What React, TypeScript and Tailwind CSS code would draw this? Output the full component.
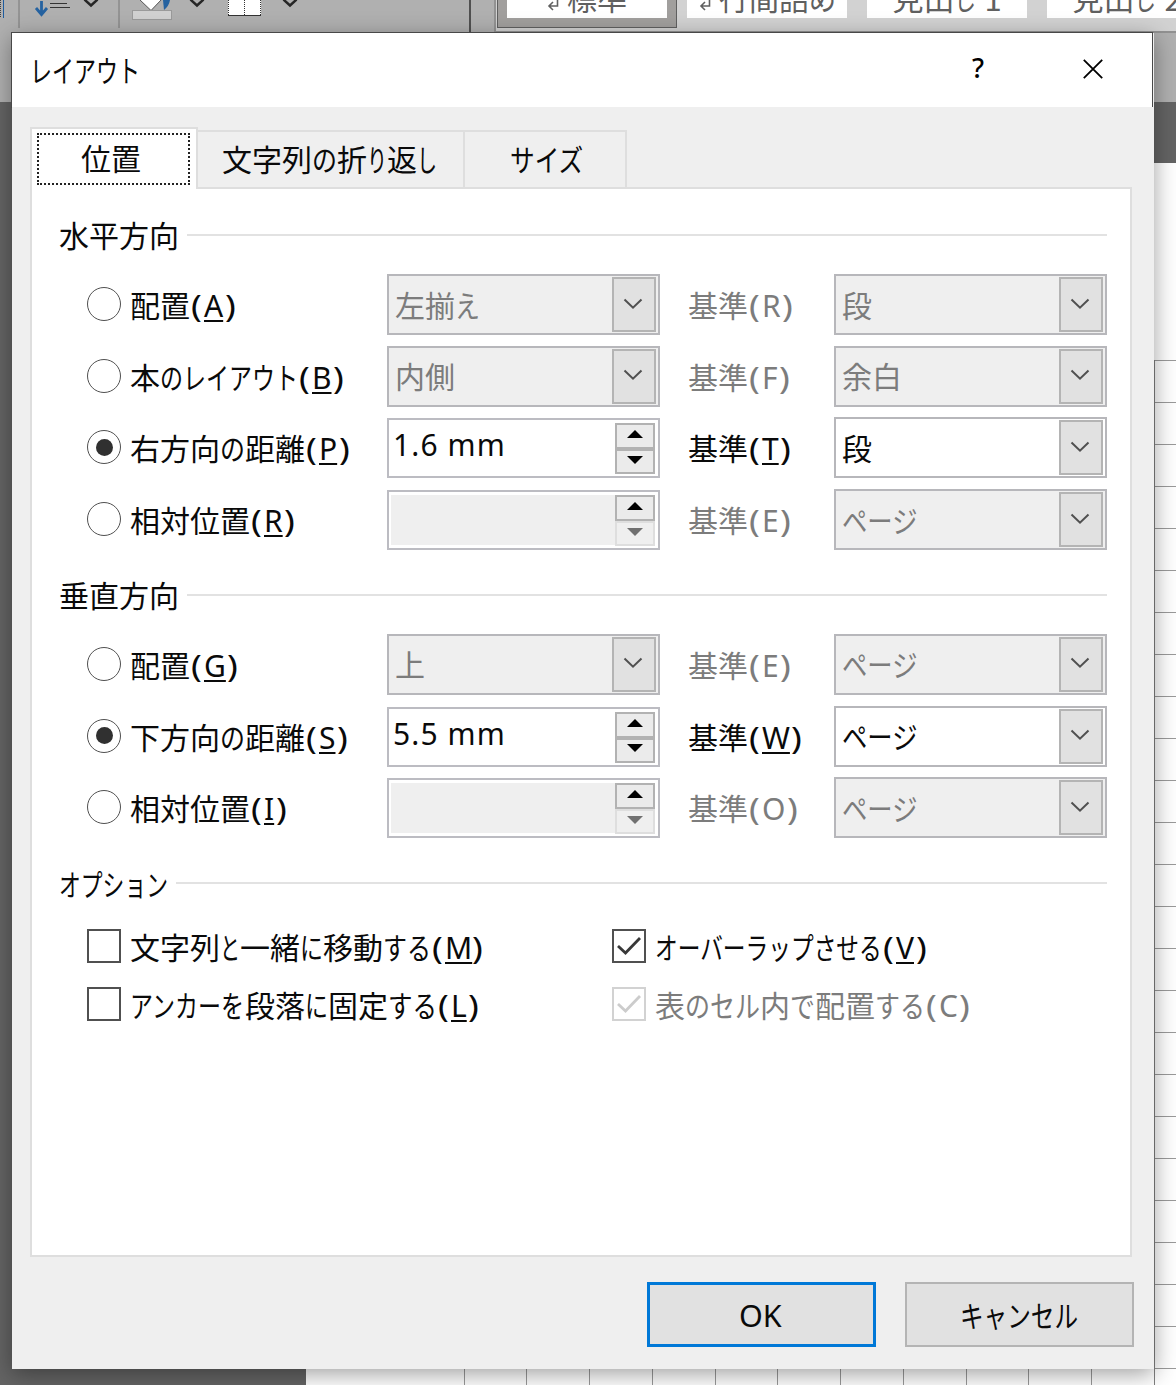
import React from "react";

type Part = string | [string, number];

/* A run of mixed kanji and narrow kana; a pair gives the kana and its drawn width. */
function Text({ parts, accel, off, plain, size = 30 }: { parts: Part[]; accel?: string; off?: boolean; plain?: boolean; size?: number }) {
  return (
    <span className={`flex whitespace-nowrap ${off ? "text-[#7c7c7c]" : "text-[#0a0a0a]"}`} style={{ fontSize: size }}>
      {parts.map((p, i) =>
        typeof p === "string" ? (
          <span key={i}>{p}</span>
        ) : (
          <span key={i} className="inline-block" style={{ width: p[1] }}>
            <span className="inline-block origin-left" style={{ transform: `scaleX(${p[1] / (p[0].length * size)})` }}>
              {p[0]}
            </span>
          </span>
        )
      )}
      {accel && (
        <span className="flex font-['Noto_Sans']">
          <span className="w-[13px] pr-px text-center"><span className="inline-block scale-x-[1.2]">(</span></span>
          <span className={accel === "M" ? "-mr-[2px] px-px underline decoration-[1.5px] underline-offset-[3px]" : plain ? "px-px" : "px-px underline decoration-[1.5px] underline-offset-[3px]"}>{accel}</span>
          <span className="w-[13px] pr-px text-center"><span className="inline-block scale-x-[1.2]">)</span></span>
        </span>
      )}
    </span>
  );
}

function Combo({ parts, off }: { parts: Part[]; off?: boolean }) {
  return (
    <div className={`mt-px flex h-[61px] w-[273px] shrink-0 items-center justify-between border-2 border-[#b7b7bb] pl-[6px] pr-[2px] ${off ? "bg-[#efefef]" : "bg-white"}`}>
      <div className="mt-px"><Text parts={parts} off={off} /></div>
      <div className="flex h-[55px] w-[44px] items-center justify-center border-2 border-[#b4b4b4] bg-[#e1e1e1]">
        <svg width="20" height="12" viewBox="0 0 20 12" className="-mt-[2px] -ml-[2px]">
          <path d="M1.5 1.5 L10 9.7 L18.5 1.5" fill="none" stroke="#505050" strokeWidth="2" />
        </svg>
      </div>
    </div>
  );
}

function Spin({ value }: { value?: string }) {
  const off = !value;
  return (
    <div className="mt-[2px] flex h-[60px] w-[273px] shrink-0 border-2 border-[#bcbcc2] bg-white p-[2px]">
      <div className={`flex flex-1 pl-[2px] font-['Noto_Sans'] text-[30px] leading-[45px] tracking-[1.1px] text-[#0a0a0a] ${off ? "mt-px mb-px bg-[#efefef]" : ""}`}>
        {value}
      </div>
      <div className="mt-px mr-px flex w-[40px] flex-col">
        <div className="flex h-[26px] items-center justify-center border-2 border-[#b2b2b2] bg-[#ebebeb]">
          <svg width="16" height="8" className="-mt-[4px]"><path d="M0 8 L8 0 L16 8Z" fill="#000" /></svg>
        </div>
        <div className={`flex h-[25px] items-center justify-center border-2 ${off ? "border-[#dedede] bg-[#efefef]" : "border-[#b2b2b2] bg-[#ebebeb]"}`}>
          <svg width="16" height="8" className="-mt-[4px]"><path d="M0 0 L8 8 L16 0Z" fill={off ? "#707070" : "#000"} /></svg>
        </div>
      </div>
    </div>
  );
}

function Row({ label, k, on, control, base, baseOff, value }: { label: Part[]; k: string; on?: boolean; control: React.ReactNode; base: string; baseOff?: boolean; value: Part[] }) {
  return (
    <div className="flex h-[71.7px] items-center">
      <div className="flex w-[300px] shrink-0 items-center gap-[9px]">
        <span className="flex size-[34px] items-center justify-center rounded-full border-[1.6px] border-[#505050] bg-white">
          {on && <span className="size-[17px] rounded-full bg-[#303030]" />}
        </span>
        <div className="mt-[3px]"><Text parts={label} accel={k} /></div>
      </div>
      {control}
      <div className="mt-[3px] ml-[28px] w-[146px] shrink-0">
        <Text parts={["基準"]} accel={base} off={baseOff} plain={baseOff} />
      </div>
      <Combo parts={value} off={baseOff} />
    </div>
  );
}

function Header({ parts }: { parts: Part[] }) {
  return (
    <div className="-ml-[28px] flex h-[73.2px] items-center gap-[8px] pt-[6.8px]">
      <div className="mt-[2px]"><Text parts={parts} /></div>
      <div className="h-[2px] flex-1 bg-[#e2e2e2]" />
    </div>
  );
}

function Check({ parts, k, on, off }: { parts: Part[]; k: string; on?: boolean; off?: boolean }) {
  return (
    <div className="flex h-[58.4px] items-center gap-[9px]">
      <span className={`flex size-[34px] items-center justify-center border-2 bg-white ${off ? "border-[#d2d2d2]" : "border-[#505050]"}`}>
        {on && (
          <svg width="26" height="20" viewBox="0 0 26 20">
            <path d="M2 10 L9.5 17 L24 2" fill="none" stroke={off ? "#cccccc" : "#383838"} strokeWidth="2.8" />
          </svg>
        )}
      </span>
      <div className="mt-[3px]"><Text parts={parts} accel={k} off={off} plain={off} /></div>
    </div>
  );
}

const PAGE: Part[] = [["ページ", 76]];
const V_LINES = [464, 526, 589, 652, 715, 777, 840, 903, 966, 1028, 1091];
const H_LINES = Array.from({ length: 25 }, (_, i) => i);

function Chevron() {
  return (
    <svg width="16" height="8" viewBox="0 0 16 8"><path d="M1.5 -0.5 L8 5.5 L14.5 -0.5" fill="none" stroke="#262626" strokeWidth="2.4" /></svg>
  );
}

function StyleTile({ parts, mark, tail }: { parts: Part[]; mark?: boolean; tail?: string }) {
  return (
    <div className="flex h-[18px] w-[160px] shrink-0 justify-center overflow-hidden bg-white">
      <div className="-mt-[24px] flex h-[44px] items-center gap-[8px] text-[#606060] [&_span]:text-[#606060]">
        {mark && (
          <svg width="12" height="16" viewBox="0 0 12 16" className="mt-[13px]"><path d="M10.500 0 V9 H2 M6 5 L2 9 L6 13" fill="none" stroke="#606060" strokeWidth="1.6" /></svg>
        )}
        <Text parts={parts} size={31} />
        {tail && <span className="font-['Noto_Sans_CJK_JP'] text-[31px]">{tail}</span>}
      </div>
    </div>
  );
}

function Backdrop() {
  return (
    <div className="flex h-full flex-col">
      <div className="flex h-[102px] shrink-0 bg-[#b0b0b0]">
        <svg width="469" height="32" viewBox="0 0 469 32" className="shrink-0">
          <path d="M0.500 0 V18" stroke="#404040" strokeDasharray="1 1" />
          <path d="M3.500 0 V18" stroke="#1f5c9e" />
          <path d="M19 0 V28 M119 0 V28" stroke="#8d8d8d" strokeWidth="1.6" />
          <path d="M41.500 1 V15 M36 8 L41.500 14.500 L47 8" fill="none" stroke="#2562a0" strokeWidth="2.8" />
          <path d="M50 3.500 H67 M50 7.500 H70" stroke="#333" />
          <path d="M139 -1 L151 10.500 L162 -1Z" fill="#fff" stroke="#555" />
          <path d="M163 0 H170 Q169 6 164 10Z" fill="#2562a0" />
          <rect x="132.500" y="10.500" width="39" height="9" fill="#d1d1d1" stroke="#9a9a9a" />
          <rect x="228" width="33" height="15" fill="#fff" />
          <path d="M228.500 0 V15 M244.500 0 V15 M260.500 0 V15" stroke="#333" strokeDasharray="1 1" />
          <path d="M228 15.500 H261" stroke="#333" />
          <g><svg x="83"><Chevron /></svg><svg x="189"><Chevron /></svg><svg x="282"><Chevron /></svg></g>
        </svg>
        <div className="h-[33px] w-[25px] shrink-0 border-l-2 border-[#505050]" />
        <div className="flex h-[33px] w-[682px] shrink-0 gap-[10px] overflow-hidden border-b-2 border-l-2 border-[#929292] bg-[#d2d2d2] pl-px">
          <div className="h-[28px] border border-t-0 border-[#606060] bg-[#a19f9d] px-[9px]"><StyleTile mark parts={[["標準", 60]]} /></div>
          <StyleTile mark parts={[["行間詰", 90], ["め", 27]]} />
          <div className="ml-[10px] flex gap-[20px]">
            <StyleTile parts={["見出", ["し", 22]]} tail="1" />
            <StyleTile parts={["見出", ["し", 22]]} tail="2" />
          </div>
        </div>
      </div>
      <div className="h-[61px] shrink-0 bg-[#646464]" />
      <div className="flex flex-1">
        <div className="w-[306px] bg-[#646464]" />
        <div className="relative flex-1 overflow-hidden bg-white">
          {V_LINES.map((x) => (
            <div key={x} className="absolute top-[197px] bottom-0 w-px bg-[#9a9a9a]" style={{ left: x - 306 }} />
          ))}
          {H_LINES.map((i) => (
            <div key={i} className="absolute right-0 h-px w-[22px] bg-[#9a9a9a]" style={{ top: 197 + i * 42 }} />
          ))}
          <div className="absolute top-[197px] right-[21px] bottom-0 w-px bg-[#808080]" />
        </div>
      </div>
    </div>
  );
}

export default function App() {
  return (
    <div className="relative h-[1385px] w-[1176px] overflow-hidden font-['Noto_Sans','Noto_Sans_CJK_JP',sans-serif]">
      <Backdrop />
      <div className="absolute top-[33px] left-[12px] flex h-[1336px] w-[1142px] flex-col bg-[#efefef] shadow-[0_5px_22px_rgba(0,0,0,0.38)]">
        <div className="flex h-[74px] w-[1140px] shrink-0 items-center bg-white pl-[18px] shadow-[0_0_0_1px_#484848]">
          <div className="w-[938px]"><Text parts={[["レイアウト", 110]]} size={30} /></div>
          <span className="-mt-[3px] w-[20px] text-center font-['Noto_Sans'] text-[27px] font-medium text-black">?</span>
          <svg width="20" height="20" viewBox="0 0 20 20" className="-mt-[2px] ml-[95px]"><path d="M0.800 0.800 L19.200 19.200 M19.200 0.800 L0.800 19.200" stroke="#000" strokeWidth="1.8" /></svg>
        </div>
        <div className="z-10 flex min-h-0 flex-1 flex-col bg-[#efefef] pr-[22px] pl-[18px]">
          <div className="mt-[20px] flex h-[60px] shrink-0 items-end">
            <div className="z-10 -mb-[2px] flex h-[62px] w-[168px] border-2 border-b-0 border-[#dedede] bg-white pt-[4px] pl-[5px]">
              <div className="flex h-[52px] w-[153px] items-center justify-center border-2 border-dotted border-[#222] pr-[5px] pb-[2px]"><Text parts={["位置"]} /></div>
            </div>
            <div className="flex h-[57px] w-[267px] items-center justify-center border-t-2 border-r-2 border-[#dedede] pr-[2px]">
              <Text parts={["文字列", ["の", 25], "折", ["り", 20], "返", ["し", 20]]} />
            </div>
            <div className="flex h-[57px] w-[162px] items-center justify-center border-t-2 border-r-2 border-[#dedede] pl-[3px]">
              <Text parts={[["サイズ", 74]]} />
            </div>
          </div>
          <div className="h-[1070px] shrink-0 border-2 border-[#dedede] bg-white pt-[6px] pr-[23px] pl-[55px]">
            <Header parts={["水平方向"]} />
            <Row label={["配置"]} k="A" control={<Combo off parts={["左揃", ["え", 25]]} />} base="R" baseOff value={["段"]} />
            <Row label={["本", ["のレイアウト", 138]]} k="B" control={<Combo off parts={["内側"]} />} base="F" baseOff value={["余白"]} />
            <Row label={["右方向", ["の", 25], "距離"]} k="P" on control={<Spin value="1.6 mm" />} base="T" value={["段"]} />
            <Row label={["相対位置"]} k="R" control={<Spin />} base="E" baseOff value={PAGE} />
            <Header parts={["垂直方向"]} />
            <Row label={["配置"]} k="G" control={<Combo off parts={["上"]} />} base="E" baseOff value={PAGE} />
            <Row label={["下方向", ["の", 25], "距離"]} k="S" on control={<Spin value="5.5 mm" />} base="W" value={PAGE} />
            <Row label={["相対位置"]} k="I" control={<Spin />} base="O" baseOff value={PAGE} />
            <Header parts={[["オプション", 109]]} />
            <div className="grid grid-cols-[525px_1fr]">
              <Check parts={["文字列", ["と", 20], "一緒", ["に", 23], "移動", ["する", 48]]} k="M" />
              <Check parts={[["オーバーラップさせる", 227]]} k="V" on />
              <Check parts={[["アンカーを", 115], "段落", ["に", 23], "固定", ["する", 49]]} k="L" />
              <Check parts={["表", ["の", 25], ["セル", 50], "内", ["で", 25], "配置", ["する", 50]]} k="C" on off />
            </div>
          </div>
          <div className="mt-[25px] -mr-[2px] flex justify-end gap-[29px]">
            <button className="flex h-[65px] w-[229px] items-center justify-center border-[3px] border-[#0078d7] bg-[#e1e1e1] pt-[2px] pr-[3px] font-['Noto_Sans']"><Text parts={[["OK", 61]]} /></button>
            <button className="flex h-[65px] w-[229px] items-center justify-center border-2 border-[#b4b4b4] bg-[#e1e1e1] pt-px pr-[2px]"><Text parts={[["キャンセル", 118]]} /></button>
          </div>
        </div>
      </div>
    </div>
  );
}
